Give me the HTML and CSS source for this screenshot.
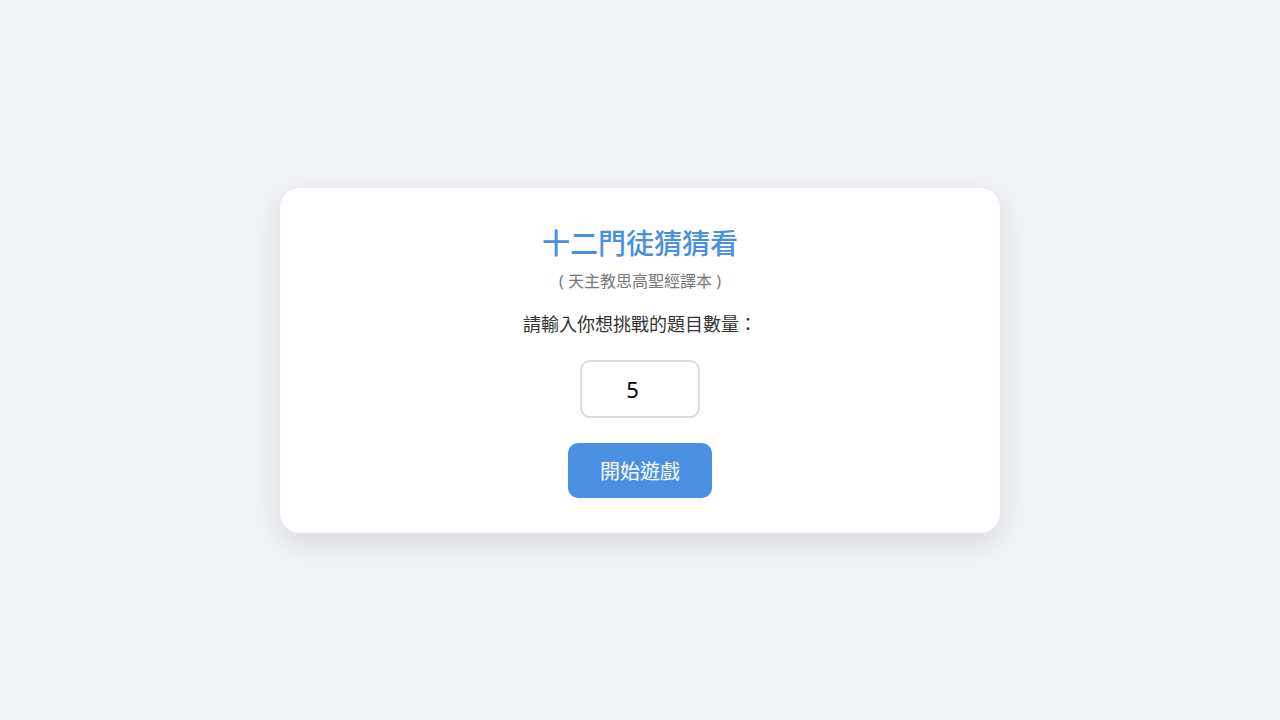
FILE: index.html
```html
<!DOCTYPE html>
<html lang="zh-Hant">
<head>
<meta charset="utf-8">
<title>十二門徒猜猜看</title>
<link rel="stylesheet" href="styles.css">
</head>
<body>
<div class="card">
  <h1 class="title">十二門徒猜猜看</h1>
  <p class="subtitle">( 天主教思高聖經譯本 )</p>
  <p class="label">請輸入你想挑戰的題目數量：</p>
  <input class="count" type="number" value="5" min="1">
  <button class="start">開始遊戲</button>
</div>
</body>
</html>
```
FILE: styles.css
```css
html, body {
  margin: 0;
  padding: 0;
}
body {
  background: #f0f2f5;
  height: 100vh;
  display: flex;
  align-items: center;
  justify-content: center;
  font-family: "Noto Sans", "Noto Sans CJK TC", sans-serif;
}
.card {
  width: 720px;
  box-sizing: border-box;
  background: #fff;
  border-radius: 20px;
  box-shadow: 0 10px 30px rgba(0, 0, 0, 0.1);
  padding: 35px 40px;
  display: flex;
  flex-direction: column;
  align-items: center;
}
.title {
  margin: 0;
  font-family: "Noto Sans CJK TC", sans-serif;
  font-size: 28px;
  line-height: 39px;
  font-weight: 500;
  color: #4a90e2;
}
.subtitle {
  margin: 8px 0 0;
  font-size: 16px;
  line-height: 22px;
  color: #777;
}
.label {
  margin: 18px 0 0;
  font-family: "Noto Sans CJK TC", sans-serif;
  font-size: 18px;
  line-height: 27px;
  color: #333;
}
.count {
  margin-top: 23px;
  width: 120px;
  height: 58px;
  box-sizing: border-box;
  border: 2px solid #ddd;
  border-radius: 10px;
  padding: 0 10px;
  text-align: center;
  font-family: "Noto Sans", "Noto Sans CJK TC", sans-serif;
  font-size: 22px;
  color: #000;
  outline: none;
}
.start {
  margin-top: 25px;
  width: 144px;
  height: 55px;
  border: none;
  border-radius: 10px;
  background: #4a90e2;
  color: #fff;
  font-family: "Noto Sans", "Noto Sans CJK TC", sans-serif;
  font-size: 20px;
  cursor: pointer;
}
```
